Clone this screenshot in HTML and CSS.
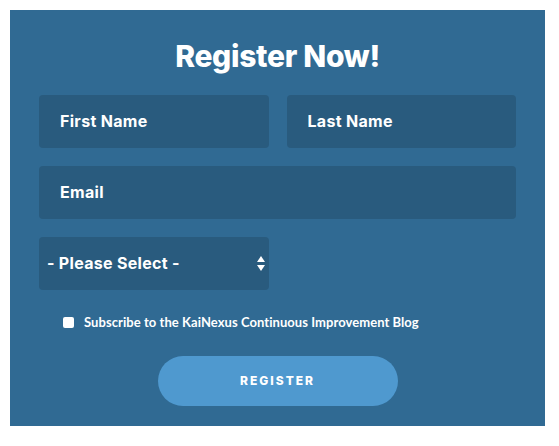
FILE: index.html
```html
<!DOCTYPE html>
<html>
<head>
    <meta charset="UTF-8">
    <link rel="stylesheet" href="styles.css">
</head>

<body>
    <div class="register">
        <h1 class="title">Register Now!</h1>

        <form class="form">
            <div class="row two">
                <input type="text" class="field" placeholder="First Name" />
                <input type="text" class="field" placeholder="Last Name" />
            </div>

            <div class="row">
                <input type="email" class="field" placeholder="Email" />
            </div>

            <div class="row two">
                <div class="select-wrap">
                    <select class="field select">
                        <option>- Please Select -</option>
                    </select>
                    <svg class="arrows" width="8" height="15" viewBox="0 0 8 15">
                        <path d="M4 0 L8 6 L0 6 Z" fill="#fff" />
                        <path d="M0 9 L8 9 L4 15 Z" fill="#fff" />
                    </svg>
                </div>
            </div>

            <label class="subscribe">
                <input type="checkbox" class="check" />
                <span>Subscribe to the KaiNexus Continuous Improvement Blog</span>
            </label>

            <div class="actions">
                <button type="button" class="submit">Register</button>
            </div>
        </form>
    </div>
</body>
</html>
```

FILE: styles.css
```css
body {
    margin: 10px;
    background: #fff;
    font-family: "Inter", "Liberation Sans", sans-serif;
}

.register {
    width: 535px;
    box-sizing: border-box;
    padding: 28px 29px 20px;
    background: #306a93;
    color: #fff;
}

.title {
    margin: 0 0 21px;
    font-size: 30px;
    line-height: 36px;
    font-weight: 800;
    text-align: center;
    letter-spacing: -0.3px;
}

.form {
    display: flex;
    flex-direction: column;
}

.row {
    display: grid;
    grid-template-columns: 1fr;
    gap: 18px;
    margin-bottom: 18px;
}

.row.two {
    grid-template-columns: 1fr 1fr;
}

.row:nth-child(3) {
    margin-bottom: 24px;
}

.field {
    height: 53px;
    width: 100%;
    box-sizing: border-box;
    border: none;
    border-radius: 4px;
    padding: 0 21px 2px;
    background: #295b7e;
    color: #fff;
    font-family: "Inter", "Liberation Sans", sans-serif;
    font-size: 16px;
    font-weight: 700;
    letter-spacing: 0.3px;
    outline: none;
}

.field::placeholder {
    color: #fff;
    opacity: 1;
}

.select-wrap {
    position: relative;
}

.select {
    appearance: none;
    -webkit-appearance: none;
    padding: 0 8px 2px;
}

.arrows {
    position: absolute;
    right: 4px;
    top: 19px;
}

.subscribe {
    display: flex;
    align-items: center;
    height: 16px;
    padding-left: 24px;
    font-family: "Lato", "Liberation Sans", sans-serif;
    font-size: 13px;
    font-weight: 700;
    line-height: 16px;
    letter-spacing: 0.06px;
}

.check {
    appearance: none;
    -webkit-appearance: none;
    width: 11px;
    height: 11px;
    margin: 0 10px 0 0;
    border-radius: 2px;
    background: #fff;
}

.actions {
    display: flex;
    justify-content: center;
    margin-top: 26px;
}

.submit {
    width: 240px;
    height: 50px;
    padding: 0 0 2px;
    border: none;
    border-radius: 25px;
    background: #4f99cf;
    color: #fff;
    font-family: "Inter", "Liberation Sans", sans-serif;
    font-size: 12px;
    font-weight: 800;
    letter-spacing: 2px;
    text-transform: uppercase;
}
```
